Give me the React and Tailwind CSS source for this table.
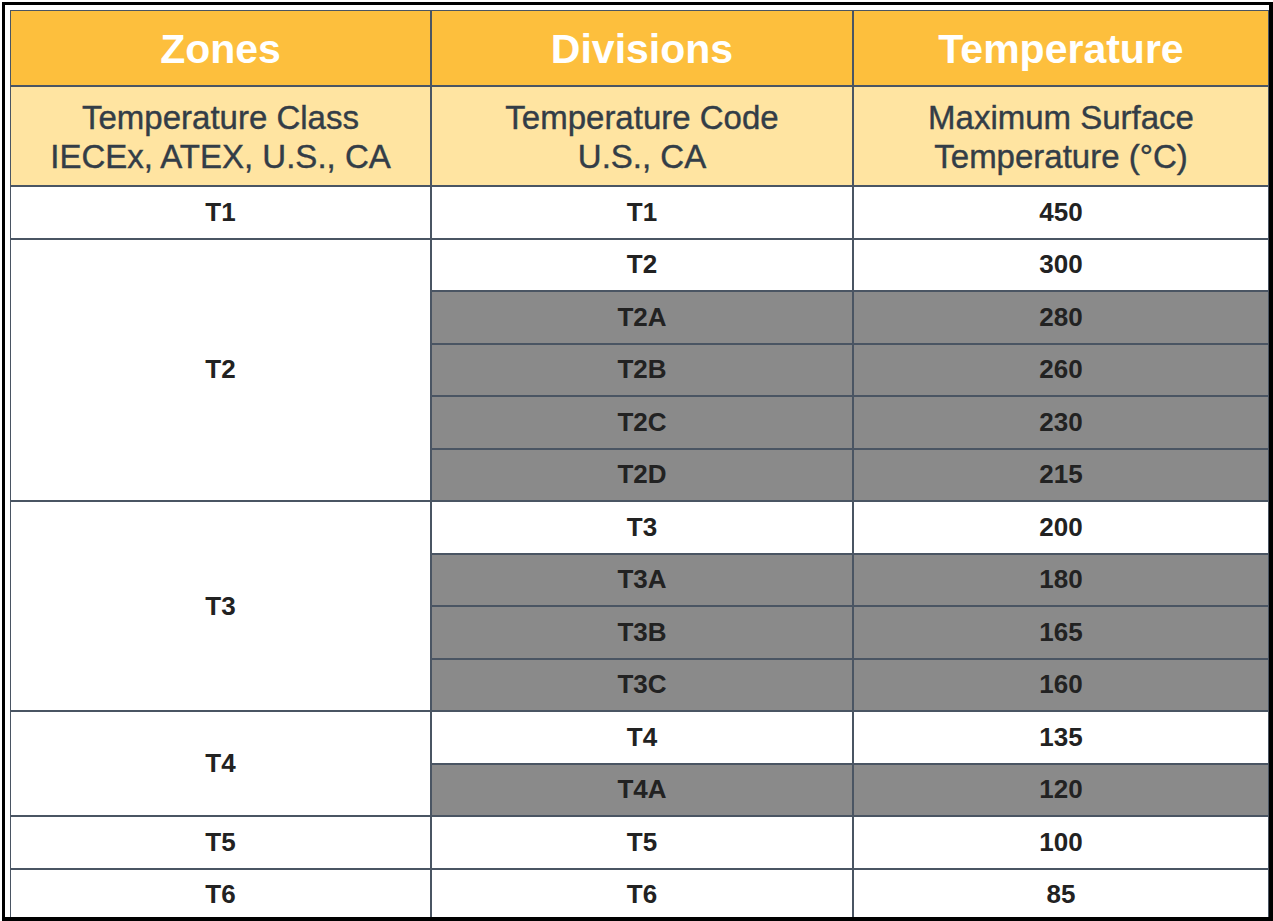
import React from "react";

const rows = [
  { zone: "T1", items: [["T1", "450", false]] },
  {
    zone: "T2",
    items: [
      ["T2", "300", false],
      ["T2A", "280", true],
      ["T2B", "260", true],
      ["T2C", "230", true],
      ["T2D", "215", true],
    ],
  },
  {
    zone: "T3",
    items: [
      ["T3", "200", false],
      ["T3A", "180", true],
      ["T3B", "165", true],
      ["T3C", "160", true],
    ],
  },
  {
    zone: "T4",
    items: [
      ["T4", "135", false],
      ["T4A", "120", true],
    ],
  },
  { zone: "T5", items: [["T5", "100", false]] },
  { zone: "T6", items: [["T6", "85", false]] },
];

export default function App() {
  const cells = [];
  rows.forEach((g) => {
    g.items.forEach((it, i) => {
      if (i === 0) {
        cells.push(
          <div
            key={g.zone + "z"}
            className={
              "bg-white flex items-center justify-center font-bold text-[26px] text-[#222] " +
              (g.items.length === 1
                ? "row-span-1"
                : g.items.length === 2
                ? "row-span-2"
                : g.items.length === 4
                ? "row-span-4"
                : "row-span-5")
            }
          >
            {g.zone}
          </div>
        );
      }
      const bg = it[2] ? "bg-[#8a8a8a]" : "bg-white";
      cells.push(
        <div
          key={g.zone + it[0] + "c"}
          className={bg + " flex items-center justify-center font-bold text-[26px] text-[#222]"}
        >
          {it[0]}
        </div>
      );
      cells.push(
        <div
          key={g.zone + it[0] + "t"}
          className={bg + " flex items-center justify-center font-bold text-[26px] text-[#222]"}
        >
          {it[1]}
        </div>
      );
    });
  });

  const sub =
    "bg-[#ffe4a1] flex flex-col items-center justify-center pt-[2px] text-[#333d47] text-[33px] leading-[39px] text-center [-webkit-text-stroke:0.4px_#333d47]";
  const head =
    "bg-[#fdbf3d] flex items-center justify-center pt-[4px] text-white font-bold text-[41px]";

  return (
    <div
      className="w-[1273px] h-[921px] bg-white pt-[2px] pl-[2px] flex overflow-hidden"
      style={{ fontFamily: '"Liberation Sans", Arial, sans-serif' }}
    >
      <div className="flex-1 border-black border-l-[3px] border-t-[3px] border-r-[4px] border-b-[4px] pt-[5px] pl-[5px] overflow-hidden">
        <div className="grid grid-cols-[419px_420px_1fr] grid-rows-[74px_98px_repeat(14,50.5px)] gap-[2px] p-[1px] bg-[#4a5563]">
          <div className={head}>Zones</div>
          <div className={head}>Divisions</div>
          <div className={head}>Temperature</div>
          <div className={sub}>
            <span>Temperature Class</span>
            <span>IECEx, ATEX, U.S., CA</span>
          </div>
          <div className={sub}>
            <span>Temperature Code</span>
            <span>U.S., CA</span>
          </div>
          <div className={sub}>
            <span>Maximum Surface</span>
            <span>Temperature (°C)</span>
          </div>
          {cells}
        </div>
      </div>
    </div>
  );
}
